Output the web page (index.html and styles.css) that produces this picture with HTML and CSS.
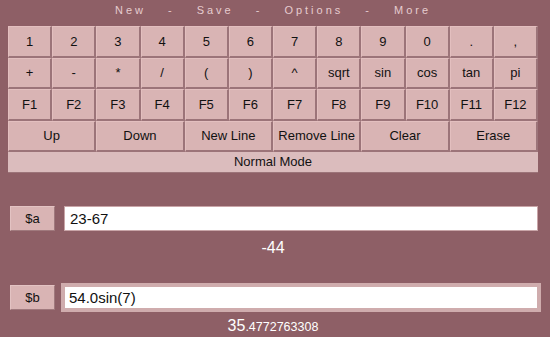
FILE: index.html
```html
<!DOCTYPE html>
<html lang="en">
<head>
    <meta charset="UTF-8">
    <title>Calculator</title>
    <link rel="stylesheet" href="styles.css">
</head>
<body>
    <!-- Top menu -->
    <div class="calc-menu">
        <span>New</span><span>-</span><span>Save</span><span>-</span><span>Options</span><span>-</span><span>More</span>
    </div>

    <!-- Keypad -->
    <div class="calc-keys">
        <button class="calc-key">1</button>
        <button class="calc-key">2</button>
        <button class="calc-key">3</button>
        <button class="calc-key">4</button>
        <button class="calc-key">5</button>
        <button class="calc-key">6</button>
        <button class="calc-key">7</button>
        <button class="calc-key">8</button>
        <button class="calc-key">9</button>
        <button class="calc-key">0</button>
        <button class="calc-key">.</button>
        <button class="calc-key">,</button>

        <button class="calc-key">+</button>
        <button class="calc-key">-</button>
        <button class="calc-key">*</button>
        <button class="calc-key">/</button>
        <button class="calc-key">(</button>
        <button class="calc-key">)</button>
        <button class="calc-key">^</button>
        <button class="calc-key">sqrt</button>
        <button class="calc-key">sin</button>
        <button class="calc-key">cos</button>
        <button class="calc-key">tan</button>
        <button class="calc-key">pi</button>

        <button class="calc-key">F1</button>
        <button class="calc-key">F2</button>
        <button class="calc-key">F3</button>
        <button class="calc-key">F4</button>
        <button class="calc-key">F5</button>
        <button class="calc-key">F6</button>
        <button class="calc-key">F7</button>
        <button class="calc-key">F8</button>
        <button class="calc-key">F9</button>
        <button class="calc-key">F10</button>
        <button class="calc-key">F11</button>
        <button class="calc-key">F12</button>

        <button class="calc-key calc-wide">Up</button>
        <button class="calc-key calc-wide">Down</button>
        <button class="calc-key calc-wide">New Line</button>
        <button class="calc-key calc-wide">Remove Line</button>
        <button class="calc-key calc-wide">Clear</button>
        <button class="calc-key calc-wide">Erase</button>
    </div>
    <div class="calc-mode">Normal Mode</div>

    <!-- Lines -->
    <div class="calc-line">
        <div class="calc-row">
            <button class="calc-var">$a</button>
            <input class="calc-input" type="text" value="23-67">
        </div>
        <div class="calc-result">-44</div>
    </div>

    <div class="calc-line">
        <div class="calc-row">
            <button class="calc-var">$b</button>
            <input class="calc-input calc-focus" type="text" value="54.0sin(7)">
        </div>
        <div class="calc-result calc-last">35<span class="calc-small">.4772763308</span></div>
    </div>
</body>
</html>
```

FILE: styles.css
```css
body {
    margin: 0;
    padding: 0 12px 0 8px;
    background: #8e5f66;
    font-family: "Liberation Sans", Arial, sans-serif;
}

.calc-menu {
    height: 26px;
    display: flex;
    justify-content: center;
    align-items: center;
    gap: 22px;
    padding-bottom: 6px;
    box-sizing: border-box;
    font-size: 11px;
    letter-spacing: 3px;
    color: #e6cccf;
}

.calc-keys {
    display: grid;
    grid-template-columns: repeat(12, 1fr);
    grid-auto-rows: 31.5px;
}

.calc-key {
    margin: 0;
    padding: 0;
    background: #d9b4b4;
    border: 1px solid #e3bfbf;
    border-right: 2px solid #9c7479;
    border-bottom: 2px solid #9c7479;
    font-family: "Liberation Sans", Arial, sans-serif;
    font-size: 13px;
    color: #111;
}

.calc-wide {
    grid-column: span 2;
}

.calc-mode {
    height: 20px;
    line-height: 19px;
    text-align: center;
    background: #dbbcbd;
    border-bottom: 1px solid #9c7479;
    font-size: 13px;
    color: #111;
}

.calc-line {
    padding-top: 33px;
}

.calc-line + .calc-line {
    padding-top: 26px;
}

.calc-row {
    display: flex;
    align-items: center;
    gap: 6px;
    padding-left: 2px;
}

.calc-var {
    width: 45px;
    height: 25px;
    margin: 0;
    padding: 0;
    background: #d9b4b4;
    border: 1px solid #e3c3c3;
    border-right: 1px solid #a0797d;
    border-bottom: 1px solid #a0797d;
    font-family: "Liberation Sans", Arial, sans-serif;
    font-size: 13px;
    color: #111;
}

.calc-input {
    flex: 1;
    height: 25px;
    box-sizing: border-box;
    margin: 0 0 0 3px;
    padding: 0 5px;
    border: 1px solid #c9a5a8;
    background: #fff;
    font-family: "Liberation Sans", Arial, sans-serif;
    font-size: 15px;
    color: #111;
}

.calc-focus {
    height: 29px;
    margin-left: 0;
    margin-right: -3px;
    border: 4px solid #cfacad;
    padding: 0 4px;
    outline: none;
}

.calc-result {
    padding-top: 8px;
    text-align: center;
    font-size: 16px;
    line-height: 18px;
    color: #fff;
}

.calc-last {
    padding-top: 5px;
}

.calc-small {
    font-size: 12.5px;
}
```
